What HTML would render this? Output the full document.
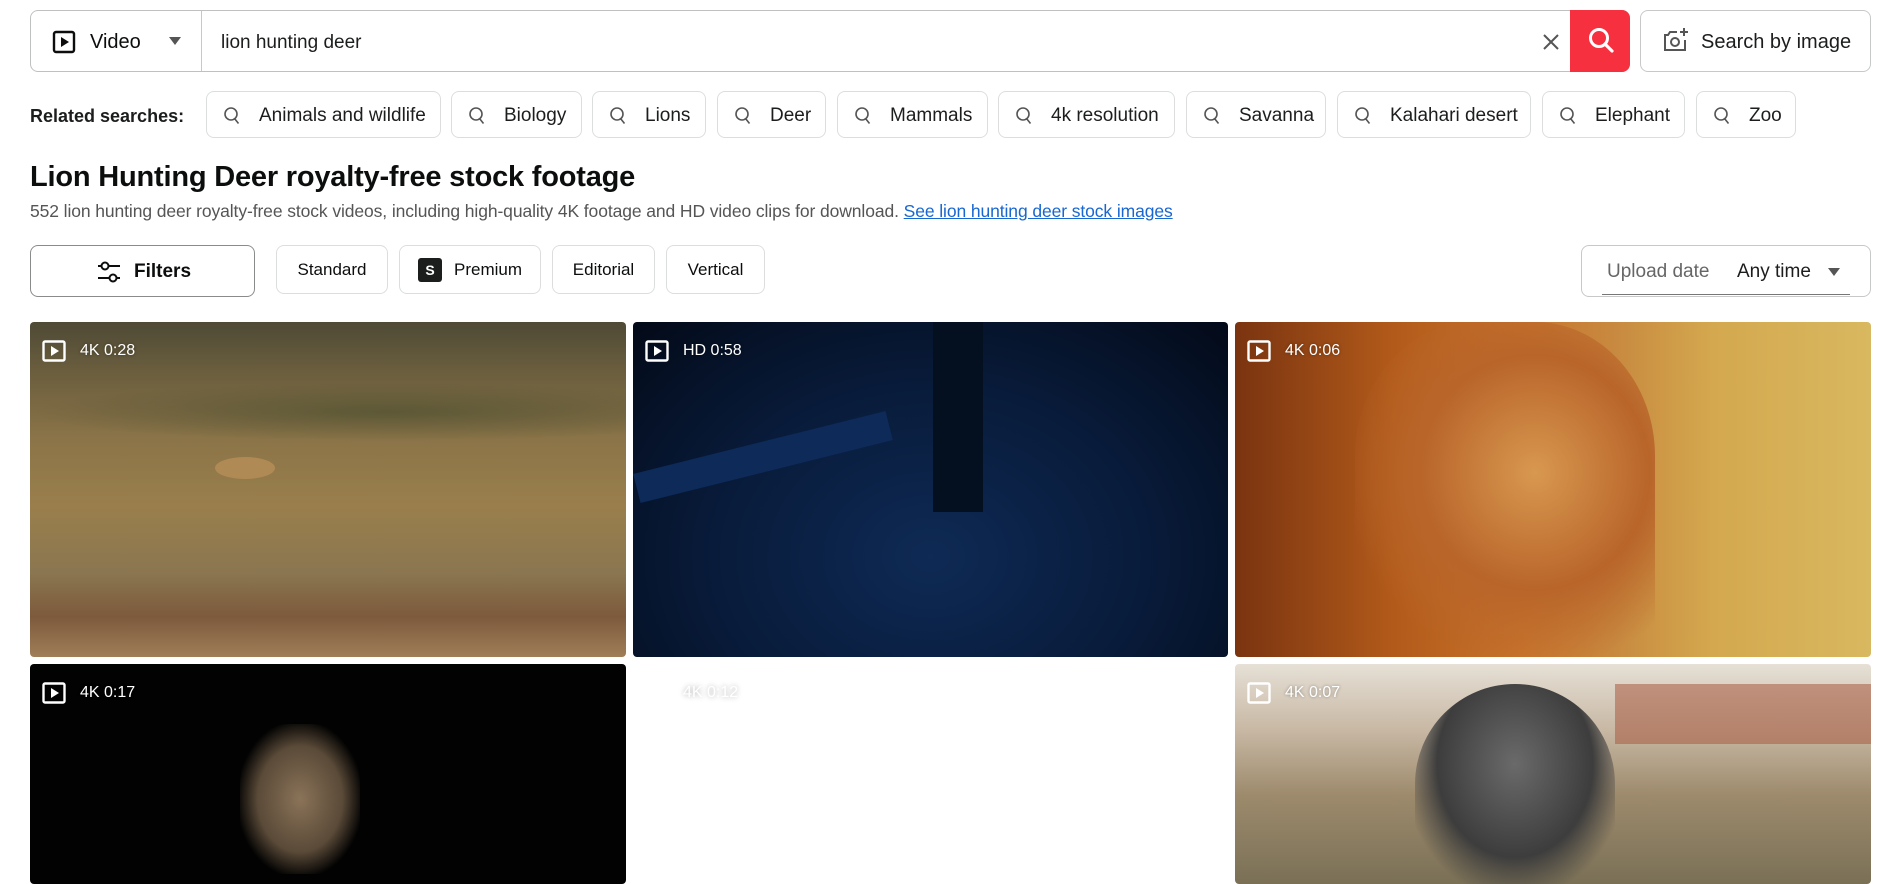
<!DOCTYPE html>
<html><head><meta charset="utf-8"><style>
*{box-sizing:border-box;margin:0;padding:0}
body{width:1901px;height:860px;overflow:hidden;background:#fff;font-family:"Liberation Sans",sans-serif;color:#0c0d0d;position:relative}
.a{position:absolute}
.box{border:1px solid #c7c9c9;border-radius:8px;background:#fff}
.chip{position:absolute;top:91px;height:47px;border:1px solid #dcdede;border-radius:8px;display:flex;align-items:center;padding-left:16px;padding-top:3px;font-size:19px;color:#1c1d1d}
.chip svg{margin-right:18px}
.pill{position:absolute;top:245px;height:49px;border:1px solid #dcdede;border-radius:8px;display:flex;align-items:center;justify-content:center;font-size:17px}
.tile{position:absolute;border-radius:4px;overflow:hidden}
.badge{position:absolute;left:12px;top:18px;display:flex;align-items:center;color:#fff;font-size:16px;text-shadow:0 0 3px rgba(0,0,0,.4)}
.badge svg{margin-right:14px}
</style></head><body>
<div class="a box" style="left:30px;top:10px;width:1600px;height:62px;border-color:#bfc1c1"></div>
<div class="a" style="left:201px;top:11px;width:1px;height:60px;background:#c7c9c9"></div>
<svg class="a" style="left:52px;top:30px" width="24" height="24" viewBox="0 0 24 24"><rect x="2" y="2" width="20" height="20" rx="2" fill="none" stroke="#0c0d0d" stroke-width="2.4"/><path d="M9 7v10l8-5z" fill="#0c0d0d"/></svg>
<div class="a" style="left:90px;top:31px;font-size:20px">Video</div>
<svg class="a" style="left:169px;top:37px" width="12" height="8"><path d="M0 0h12L6 8z" fill="#555"/></svg>
<div class="a" style="left:221px;top:32px;font-size:19px;color:#1c1d1d">lion hunting deer</div>
<svg class="a" style="left:1543px;top:34px" width="16" height="16"><path d="M1 1l14 14M15 1L1 15" stroke="#555" stroke-width="2"/></svg>
<div class="a" style="left:1570px;top:10px;width:60px;height:62px;background:#f73040;border-radius:0 8px 8px 0"></div>
<svg class="a" style="left:1586px;top:26px" width="30" height="30" viewBox="0 0 30 30"><circle cx="13" cy="12" r="8.5" fill="none" stroke="#fff" stroke-width="3"/><path d="M19 18l7 7" stroke="#fff" stroke-width="3.2" stroke-linecap="round"/></svg>
<div class="a box" style="left:1640px;top:10px;width:231px;height:62px;border-color:#c7c9c9"></div>
<svg class="a" style="left:1662px;top:26px" width="28" height="28" viewBox="0 0 28 28"><path d="M15 6H8l-2 3H3v15h20V14" fill="none" stroke="#555" stroke-width="2"/><circle cx="13" cy="16" r="4" fill="none" stroke="#555" stroke-width="2"/><path d="M22 2v8M18 6h8" stroke="#555" stroke-width="2"/></svg>
<div class="a" style="left:1701px;top:31px;font-size:20px;color:#1c1d1d">Search by image</div>

<div class="a" style="left:30px;top:106px;font-size:18px;font-weight:bold;color:#1c1d1d">Related searches:</div>
<div class="chip" style="left:206px;width:235px"><svg width="18" height="20" viewBox="0 0 18 20"><circle cx="8" cy="8" r="6" fill="none" stroke="#555" stroke-width="1.6"/><path d="M11.5 12.5l4 5" stroke="#555" stroke-width="1.6"/></svg>Animals and wildlife</div>
<div class="chip" style="left:451px;width:131px"><svg width="18" height="20" viewBox="0 0 18 20"><circle cx="8" cy="8" r="6" fill="none" stroke="#555" stroke-width="1.6"/><path d="M11.5 12.5l4 5" stroke="#555" stroke-width="1.6"/></svg>Biology</div>
<div class="chip" style="left:592px;width:114px"><svg width="18" height="20" viewBox="0 0 18 20"><circle cx="8" cy="8" r="6" fill="none" stroke="#555" stroke-width="1.6"/><path d="M11.5 12.5l4 5" stroke="#555" stroke-width="1.6"/></svg>Lions</div>
<div class="chip" style="left:717px;width:109px"><svg width="18" height="20" viewBox="0 0 18 20"><circle cx="8" cy="8" r="6" fill="none" stroke="#555" stroke-width="1.6"/><path d="M11.5 12.5l4 5" stroke="#555" stroke-width="1.6"/></svg>Deer</div>
<div class="chip" style="left:837px;width:151px"><svg width="18" height="20" viewBox="0 0 18 20"><circle cx="8" cy="8" r="6" fill="none" stroke="#555" stroke-width="1.6"/><path d="M11.5 12.5l4 5" stroke="#555" stroke-width="1.6"/></svg>Mammals</div>
<div class="chip" style="left:998px;width:177px"><svg width="18" height="20" viewBox="0 0 18 20"><circle cx="8" cy="8" r="6" fill="none" stroke="#555" stroke-width="1.6"/><path d="M11.5 12.5l4 5" stroke="#555" stroke-width="1.6"/></svg>4k resolution</div>
<div class="chip" style="left:1186px;width:140px"><svg width="18" height="20" viewBox="0 0 18 20"><circle cx="8" cy="8" r="6" fill="none" stroke="#555" stroke-width="1.6"/><path d="M11.5 12.5l4 5" stroke="#555" stroke-width="1.6"/></svg>Savanna</div>
<div class="chip" style="left:1337px;width:194px"><svg width="18" height="20" viewBox="0 0 18 20"><circle cx="8" cy="8" r="6" fill="none" stroke="#555" stroke-width="1.6"/><path d="M11.5 12.5l4 5" stroke="#555" stroke-width="1.6"/></svg>Kalahari desert</div>
<div class="chip" style="left:1542px;width:143px"><svg width="18" height="20" viewBox="0 0 18 20"><circle cx="8" cy="8" r="6" fill="none" stroke="#555" stroke-width="1.6"/><path d="M11.5 12.5l4 5" stroke="#555" stroke-width="1.6"/></svg>Elephant</div>
<div class="chip" style="left:1696px;width:100px"><svg width="18" height="20" viewBox="0 0 18 20"><circle cx="8" cy="8" r="6" fill="none" stroke="#555" stroke-width="1.6"/><path d="M11.5 12.5l4 5" stroke="#555" stroke-width="1.6"/></svg>Zoo</div>

<div class="a" style="left:30px;top:161px;font-size:29px;font-weight:bold;letter-spacing:-0.2px">Lion Hunting Deer royalty-free stock footage</div>
<div class="a" style="left:30px;top:201px;font-size:17.5px;color:#555;letter-spacing:-0.1px">552 lion hunting deer royalty-free stock videos, including high-quality 4K footage and HD video clips for download. <span style="color:#1867d1;text-decoration:underline">See lion hunting deer stock images</span></div>

<div class="a box" style="left:30px;top:245px;width:225px;height:52px;border-color:#8a8c8c"></div>
<svg class="a" style="left:96px;top:259px" width="26" height="26" viewBox="0 0 26 26"><path d="M2 7h22M2 19h22" stroke="#0c0d0d" stroke-width="2"/><circle cx="9" cy="7" r="3.5" fill="#fff" stroke="#0c0d0d" stroke-width="2"/><circle cx="17" cy="19" r="3.5" fill="#fff" stroke="#0c0d0d" stroke-width="2"/></svg>
<div class="a" style="left:134px;top:261px;font-size:19px;font-weight:bold">Filters</div>
<div class="pill" style="left:276px;width:112px">Standard</div>
<div class="pill" style="left:399px;width:142px"><span style="display:inline-block;width:24px;height:24px;background:#1c1d1d;color:#fff;border-radius:3px;font-size:14px;font-weight:bold;text-align:center;line-height:24px;margin-right:12px">S</span>Premium</div>
<div class="pill" style="left:552px;width:103px">Editorial</div>
<div class="pill" style="left:666px;width:99px">Vertical</div>
<div class="a box" style="left:1581px;top:245px;width:290px;height:52px"></div>
<div class="a" style="left:1607px;top:261px;font-size:19px;color:#666">Upload date</div>
<div class="a" style="left:1737px;top:261px;font-size:19px;color:#1c1d1d">Any time</div>
<svg class="a" style="left:1828px;top:268px" width="12" height="8"><path d="M0 0h12L6 8z" fill="#555"/></svg>
<div class="a" style="left:1602px;top:294px;width:248px;height:1px;background:#777"></div>

<div class="tile" style="left:30px;top:322px;width:596px;height:335px;background:linear-gradient(180deg,#4e4a35 0%,#6b5e3e 15%,#8b7448 35%,#9a7f4c 55%,#8a7650 75%,#7d5a3c 88%,#a07e58 100%)">
<div class="a" style="left:0;top:60px;width:596px;height:60px;background:radial-gradient(ellipse at 60% 50%,rgba(70,75,45,.6),transparent 70%)"></div>
<div class="a" style="left:185px;top:135px;width:60px;height:22px;border-radius:50%;background:#b08a55"></div>
<div class="badge"><svg width="24" height="22" viewBox="0 0 24 22"><rect x="1.5" y="1.5" width="21" height="19" rx="1.5" fill="none" stroke="#fff" stroke-width="2.4"/><path d="M9 6v10l8-5z" fill="#fff"/></svg>4K 0:28</div></div>
<div class="tile" style="left:633px;top:322px;width:595px;height:335px;background:radial-gradient(ellipse at 50% 70%,#0e2a55 0%,#081a38 55%,#030a18 100%)">
<div class="a" style="left:300px;top:0;width:50px;height:190px;background:#04101f"></div>
<div class="a" style="left:0;top:120px;width:260px;height:30px;background:#0d2a58;transform:rotate(-14deg)"></div>
<div class="badge"><svg width="24" height="22" viewBox="0 0 24 22"><rect x="1.5" y="1.5" width="21" height="19" rx="1.5" fill="none" stroke="#fff" stroke-width="2.4"/><path d="M9 6v10l8-5z" fill="#fff"/></svg>HD 0:58</div></div>
<div class="tile" style="left:1235px;top:322px;width:636px;height:335px;background:linear-gradient(90deg,#7a3410 0%,#b25a1a 25%,#c8742c 45%,#c88a40 60%,#d4a84e 75%,#d8b860 100%)">
<div class="a" style="left:120px;top:0;width:300px;height:335px;border-radius:40% 40% 0 0;background:radial-gradient(ellipse at 60% 45%,#d89850 0%,#b9652a 45%,transparent 75%)"></div>
<div class="badge"><svg width="24" height="22" viewBox="0 0 24 22"><rect x="1.5" y="1.5" width="21" height="19" rx="1.5" fill="none" stroke="#fff" stroke-width="2.4"/><path d="M9 6v10l8-5z" fill="#fff"/></svg>4K 0:06</div></div>
<div class="tile" style="left:30px;top:664px;width:596px;height:220px;background:#020202">
<div class="a" style="left:210px;top:60px;width:120px;height:150px;border-radius:40% 40% 0 0;background:radial-gradient(ellipse,#8a7358 0%,#5a4a38 50%,transparent 75%)"></div>
<div class="badge"><svg width="24" height="22" viewBox="0 0 24 22"><rect x="1.5" y="1.5" width="21" height="19" rx="1.5" fill="none" stroke="#fff" stroke-width="2.4"/><path d="M9 6v10l8-5z" fill="#fff"/></svg>4K 0:17</div></div>
<div class="tile" style="left:633px;top:664px;width:595px;height:220px;background:#fff">
<div class="badge" style="opacity:.35;text-shadow:0 0 6px #000"><svg width="24" height="22" viewBox="0 0 24 22"><rect x="1.5" y="1.5" width="21" height="19" rx="1.5" fill="none" stroke="#fff" stroke-width="2.4"/><path d="M9 6v10l8-5z" fill="#fff"/></svg>4K 0:12</div></div>
<div class="tile" style="left:1235px;top:664px;width:636px;height:220px;background:linear-gradient(180deg,#e6e0d6 0%,#c8b8a4 30%,#9d8a6c 60%,#7a7056 100%)">
<div class="a" style="left:380px;top:20px;width:256px;height:60px;background:#a85a40;opacity:.55"></div>
<div class="a" style="left:180px;top:20px;width:200px;height:200px;border-radius:50% 50% 0 0;background:radial-gradient(ellipse at 50% 40%,#6a6a6a 0%,#3d3d3d 55%,transparent 80%)"></div>
<div class="badge"><svg width="24" height="22" viewBox="0 0 24 22"><rect x="1.5" y="1.5" width="21" height="19" rx="1.5" fill="none" stroke="#fff" stroke-width="2.4"/><path d="M9 6v10l8-5z" fill="#fff"/></svg>4K 0:07</div></div>
</body></html>
